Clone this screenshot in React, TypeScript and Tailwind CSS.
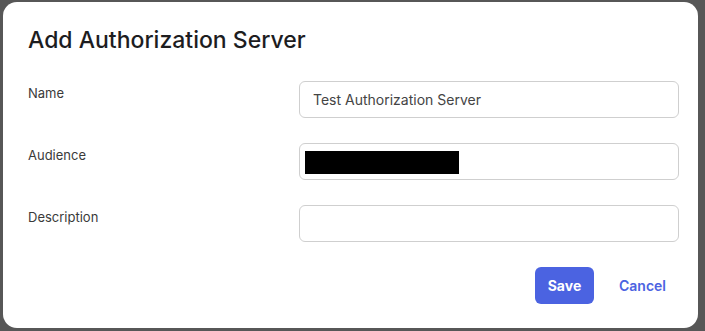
const fields = [
  { label: 'Name', value: 'Test Authorization Server' },
  { label: 'Audience', value: '', redacted: true },
  { label: 'Description', value: '' },
]

const App = () => (
  <div className="flex h-screen w-full bg-[#575757] pb-[3px] pl-[3px] pr-[7px] pt-[2px] font-['Inter',sans-serif]">
    <div className="flex flex-1 flex-col rounded-[14px] bg-white pb-[24px] pl-[25px] pr-[19px] pt-[24px]">
      <h2 className="text-[23px] font-medium leading-[29px] text-[#1d1d1f]">Add Authorization Server</h2>
      <div className="mt-[26px] flex flex-col gap-[25px]">
        {fields.map((f) => (
          <div key={f.label} className="flex">
            <label className="w-[271px] pt-[3px] text-[13px] leading-[18px] text-[#3a3a3a]">{f.label}</label>
            <div className="relative h-[37px] flex-1 rounded-[6px] border border-[#cfcfcf]">
              {f.value && (
                <span className="absolute left-[13px] top-[8px] text-[14px] leading-[20px] text-[#444]">{f.value}</span>
              )}
              {f.redacted && <span className="absolute left-[5px] top-[7px] h-[23px] w-[154px] bg-black" />}
            </div>
          </div>
        ))}
      </div>
      <div className="mt-[25px] flex justify-end gap-[12px]">
        <button className="h-[37px] w-[59px] rounded-[6px] bg-[#4b63e1] text-[14px] font-bold text-white">Save</button>
        <button className="h-[37px] px-[13px] text-[14px] font-semibold text-[#4b63e1]">Cancel</button>
      </div>
    </div>
  </div>
)

export default App
